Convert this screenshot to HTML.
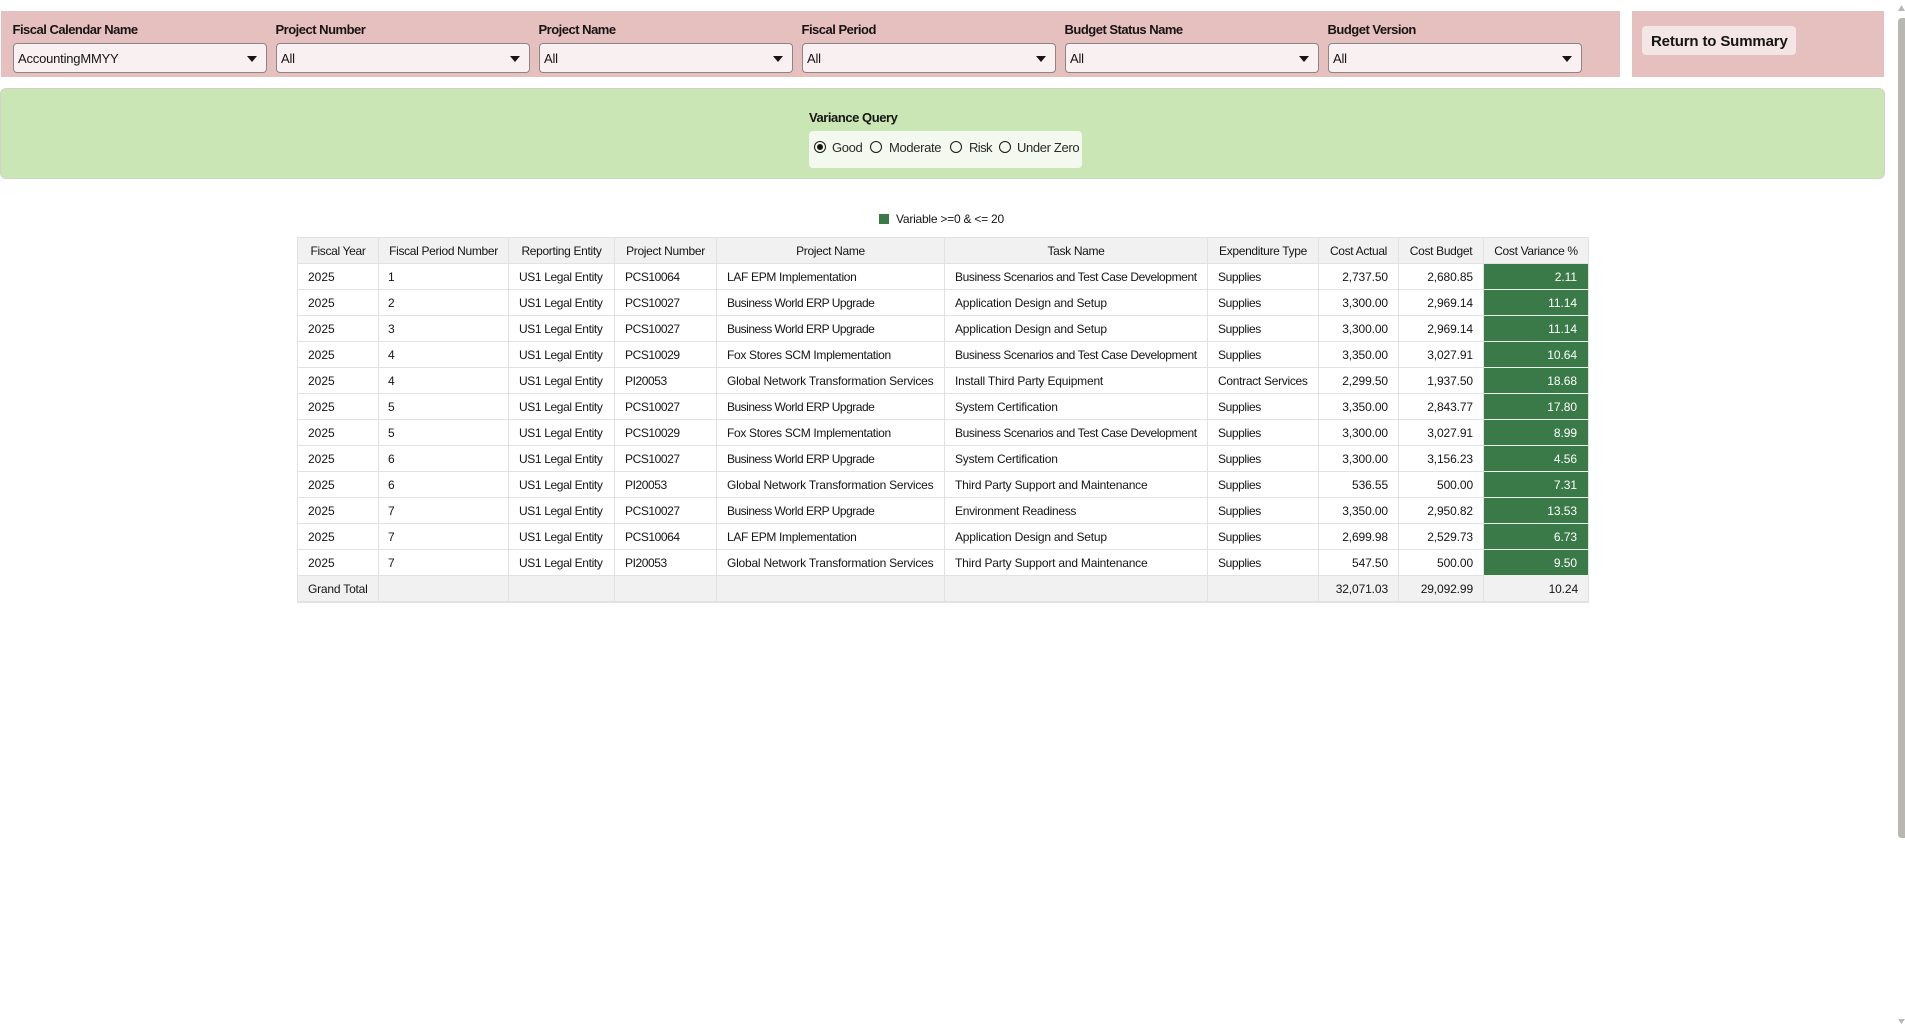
<!DOCTYPE html>
<html lang="en">
<head>
<meta charset="utf-8">
<title>Variance Query</title>
<style>
html,body{margin:0;padding:0;background:#fff;width:1905px;height:1024px;overflow:hidden}
body{font-family:"Liberation Sans",sans-serif;color:#161513;position:relative}
.a{position:absolute}
.t{position:absolute;white-space:nowrap}
.pink{background:#e6bfbf}
.lab{font-size:13px;font-weight:bold;line-height:16px;top:22px;letter-spacing:-.5px;color:#161513}
.sel{position:absolute;top:43px;width:254px;height:30px;box-sizing:border-box;background:#f9f0f1;border:1px solid #8b8686;border-radius:4px;font-size:13px;line-height:30px;padding-left:4px;letter-spacing:-.2px}
.sel i{position:absolute;right:9px;top:12px;width:0;height:0;border-left:5px solid transparent;border-right:5px solid transparent;border-top:6px solid #161513}
.rad{position:absolute;top:141px;width:12px;height:12px;box-sizing:border-box;border:1.4px solid #161513;border-radius:50%;background:#f4f9ef}
.rl{position:absolute;top:140px;font-size:13px;line-height:16px;white-space:nowrap;color:#2a2a2a;letter-spacing:-.35px}
table{position:absolute;left:297px;top:237px;width:1292px;border-collapse:separate;border-spacing:0;table-layout:fixed;border-top:1px solid #e2e2e2;border-left:1.5px solid #e2e2e2;font-size:12px;color:#161513}
th,td{box-sizing:border-box;height:26px;padding:0 10px;border-right:1px solid #e2e2e2;border-bottom:1px solid #e2e2e2;white-space:nowrap;overflow:hidden;font-weight:normal;text-align:left}
th{background:#f1f1f1;text-align:center;padding:0 2px;letter-spacing:-.33px}
td:nth-child(2){padding-left:9px}
td:nth-child(3){letter-spacing:-.37px}
td:nth-child(4){letter-spacing:-.42px}
td:nth-child(5){letter-spacing:-.33px}
td:nth-child(6){letter-spacing:-.2px}
td:nth-child(7){letter-spacing:-.4px}
td.b{letter-spacing:-.5px}
td.w{letter-spacing:-.22px}
td.s{letter-spacing:-.4px}
td.n{text-align:right;padding-right:10px;padding-left:2px;letter-spacing:-.12px}
td.g{background:#3a7a48;color:#fff;text-align:right;padding-right:11px;border-bottom-color:#eef3ee;letter-spacing:-.05px}
tr.tot td{background:#f1f1f1;border-bottom:2px solid #e2e2e2;height:27px}
tr.tot td:first-child{letter-spacing:-.2px}
</style>
</head>
<body>
<div class="a pink" style="left:1px;top:11px;width:1619px;height:66px"></div>
<div class="a pink" style="left:1632px;top:11px;width:252px;height:66px"></div>

<div class="t lab" style="left:12.5px">Fiscal Calendar Name</div>
<div class="t lab" style="left:275.5px">Project Number</div>
<div class="t lab" style="left:538.5px">Project Name</div>
<div class="t lab" style="left:801.5px">Fiscal Period</div>
<div class="t lab" style="left:1064.5px">Budget Status Name</div>
<div class="t lab" style="left:1327.5px">Budget Version</div>

<div class="sel" style="left:13px">AccountingMMYY<i></i></div>
<div class="sel" style="left:276px">All<i></i></div>
<div class="sel" style="left:539px">All<i></i></div>
<div class="sel" style="left:802px">All<i></i></div>
<div class="sel" style="left:1065px">All<i></i></div>
<div class="sel" style="left:1328px">All<i></i></div>

<div class="a" style="left:1642px;top:26px;width:154px;height:29px;background:#f5e6e6;border-radius:4px"></div>
<div class="t" style="left:1651px;top:33px;font-size:15px;font-weight:bold;line-height:18px;letter-spacing:-.15px;color:#161513">Return to Summary</div>

<div class="a" style="left:0;top:88px;width:1885px;height:91px;box-sizing:border-box;background:#cbe6b5;border:1px solid #cfd4cb;border-radius:6px"></div>
<div class="t" style="left:809px;top:110px;font-size:13px;font-weight:bold;line-height:16px;letter-spacing:-.45px">Variance Query</div>
<div class="a" style="left:809px;top:131px;width:273px;height:37px;background:#f4f9ef;border-radius:4px"></div>
<div class="rad" style="left:814px"><div class="a" style="left:1.8px;top:1.8px;width:6px;height:6px;border-radius:50%;background:#161513"></div></div>
<div class="rl" style="left:832px">Good</div>
<div class="rad" style="left:870px"></div>
<div class="rl" style="left:889px">Moderate</div>
<div class="rad" style="left:950px"></div>
<div class="rl" style="left:969px;letter-spacing:-.6px">Risk</div>
<div class="rad" style="left:999px"></div>
<div class="rl" style="left:1017px">Under Zero</div>

<div class="a" style="left:879px;top:214px;width:10px;height:10px;background:#3a7a48"></div>
<div class="t" style="left:896px;top:211px;font-size:12px;line-height:16px;letter-spacing:-.23px">Variable &gt;=0 &amp; &lt;= 20</div>

<table>
<colgroup>
<col style="width:81px"><col style="width:130px"><col style="width:106px"><col style="width:102px"><col style="width:228px"><col style="width:263px"><col style="width:111px"><col style="width:80px"><col style="width:85px"><col style="width:105px">
</colgroup>
<thead>
<tr><th>Fiscal Year</th><th>Fiscal Period Number</th><th>Reporting Entity</th><th>Project Number</th><th>Project Name</th><th>Task Name</th><th>Expenditure Type</th><th>Cost Actual</th><th>Cost Budget</th><th>Cost Variance %</th></tr>
</thead>
<tbody>
<tr><td>2025</td><td>1</td><td>US1 Legal Entity</td><td>PCS10064</td><td>LAF EPM Implementation</td><td class="s">Business Scenarios and Test Case Development</td><td>Supplies</td><td class="n">2,737.50</td><td class="n">2,680.85</td><td class="g">2.11</td></tr>
<tr><td>2025</td><td>2</td><td>US1 Legal Entity</td><td>PCS10027</td><td class="b">Business World ERP Upgrade</td><td>Application Design and Setup</td><td>Supplies</td><td class="n">3,300.00</td><td class="n">2,969.14</td><td class="g">11.14</td></tr>
<tr><td>2025</td><td>3</td><td>US1 Legal Entity</td><td>PCS10027</td><td class="b">Business World ERP Upgrade</td><td>Application Design and Setup</td><td>Supplies</td><td class="n">3,300.00</td><td class="n">2,969.14</td><td class="g">11.14</td></tr>
<tr><td>2025</td><td>4</td><td>US1 Legal Entity</td><td>PCS10029</td><td>Fox Stores SCM Implementation</td><td class="s">Business Scenarios and Test Case Development</td><td>Supplies</td><td class="n">3,350.00</td><td class="n">3,027.91</td><td class="g">10.64</td></tr>
<tr><td>2025</td><td>4</td><td>US1 Legal Entity</td><td>PI20053</td><td class="w">Global Network Transformation Services</td><td>Install Third Party Equipment</td><td style="letter-spacing:-.3px">Contract Services</td><td class="n">2,299.50</td><td class="n">1,937.50</td><td class="g">18.68</td></tr>
<tr><td>2025</td><td>5</td><td>US1 Legal Entity</td><td>PCS10027</td><td class="b">Business World ERP Upgrade</td><td>System Certification</td><td>Supplies</td><td class="n">3,350.00</td><td class="n">2,843.77</td><td class="g">17.80</td></tr>
<tr><td>2025</td><td>5</td><td>US1 Legal Entity</td><td>PCS10029</td><td>Fox Stores SCM Implementation</td><td class="s">Business Scenarios and Test Case Development</td><td>Supplies</td><td class="n">3,300.00</td><td class="n">3,027.91</td><td class="g">8.99</td></tr>
<tr><td>2025</td><td>6</td><td>US1 Legal Entity</td><td>PCS10027</td><td class="b">Business World ERP Upgrade</td><td>System Certification</td><td>Supplies</td><td class="n">3,300.00</td><td class="n">3,156.23</td><td class="g">4.56</td></tr>
<tr><td>2025</td><td>6</td><td>US1 Legal Entity</td><td>PI20053</td><td class="w">Global Network Transformation Services</td><td>Third Party Support and Maintenance</td><td>Supplies</td><td class="n">536.55</td><td class="n">500.00</td><td class="g">7.31</td></tr>
<tr><td>2025</td><td>7</td><td>US1 Legal Entity</td><td>PCS10027</td><td class="b">Business World ERP Upgrade</td><td style="letter-spacing:-.3px">Environment Readiness</td><td>Supplies</td><td class="n">3,350.00</td><td class="n">2,950.82</td><td class="g">13.53</td></tr>
<tr><td>2025</td><td>7</td><td>US1 Legal Entity</td><td>PCS10064</td><td>LAF EPM Implementation</td><td>Application Design and Setup</td><td>Supplies</td><td class="n">2,699.98</td><td class="n">2,529.73</td><td class="g">6.73</td></tr>
<tr><td>2025</td><td>7</td><td>US1 Legal Entity</td><td>PI20053</td><td class="w">Global Network Transformation Services</td><td>Third Party Support and Maintenance</td><td>Supplies</td><td class="n">547.50</td><td class="n">500.00</td><td class="g">9.50</td></tr>
<tr class="tot"><td>Grand Total</td><td></td><td></td><td></td><td></td><td></td><td></td><td class="n">32,071.03</td><td class="n">29,092.99</td><td class="n">10.24</td></tr>
</tbody>
</table>

<svg class="a" style="left:1898px;top:5px" width="7" height="6" viewBox="0 0 7 6"><path d="M3.5 0L7 6H0Z" fill="#b9b7b2"/></svg>
<div class="a" style="left:1898px;top:18px;width:7px;height:820px;background:#b9b7b2;border-radius:3.5px 0 0 3.5px"></div>
<svg class="a" style="left:1898px;top:1019px" width="7" height="5" viewBox="0 0 7 5"><path d="M0 0H7L3.5 5Z" fill="#b9b7b2"/></svg>
</body>
</html>
